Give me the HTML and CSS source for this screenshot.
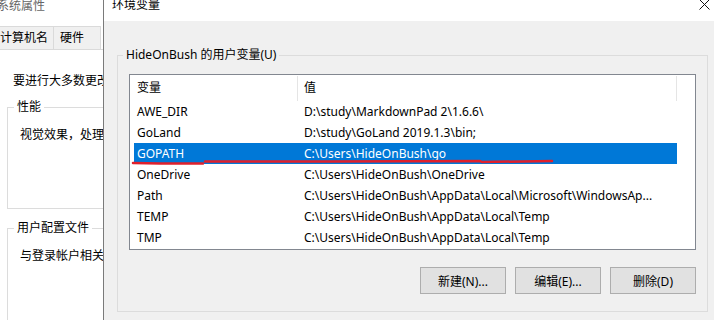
FILE: index.html
```html
<!DOCTYPE html>
<html lang="zh-CN">
<head>
    <meta charset="UTF-8">
    <link rel="stylesheet" href="styles.css">
    <title>环境变量</title>
</head>
<body>
    <div class="screen">
        <div class="sysprops">
            <div class="sys-title">系统属性</div>
            <div class="tabs">
                <div class="tab tab-first">计算机名</div>
                <div class="tab">硬件</div>
            </div>
            <div class="tab-page">
                <div class="intro">要进行大多数更改</div>
                <div class="sys-group perf">
                    <span class="sys-legend">性能</span>
                    <div class="sys-text">视觉效果，处理器计划</div>
                </div>
                <div class="sys-group profile">
                    <span class="sys-legend">用户配置文件</span>
                    <div class="sys-text">与登录帐户相关的桌面设置</div>
                </div>
            </div>
        </div>

        <div class="dialog">
            <div class="dlg-title">
                <span>环境变量</span>
                <svg class="close" width="11" height="11" viewBox="0 0 11 11">
                    <path d="M0.5 0.5 L10.5 10.5 M10.5 0.5 L0.5 10.5" stroke="#111" stroke-width="1" fill="none"/>
                </svg>
            </div>
            <div class="dlg-body">
                <div class="group">
                    <span class="legend">HideOnBush 的用户变量(U)</span>
                    <div class="listview">
                        <div class="lv-head">
                            <div class="col-name">变量</div>
                            <div class="col-value">值</div>
                            <div class="col-rest"></div>
                        </div>
                        <div class="lv-row"><div class="col-name">AWE_DIR</div><div class="col-value">D:\study\MarkdownPad 2\1.6.6\</div></div>
                        <div class="lv-row"><div class="col-name">GoLand</div><div class="col-value">D:\study\GoLand 2019.1.3\bin;</div></div>
                        <div class="lv-row selected"><div class="col-name">GOPATH</div><div class="col-value">C:\Users\HideOnBush\go</div></div>
                        <div class="lv-row"><div class="col-name">OneDrive</div><div class="col-value">C:\Users\HideOnBush\OneDrive</div></div>
                        <div class="lv-row"><div class="col-name">Path</div><div class="col-value">C:\Users\HideOnBush\AppData\Local\Microsoft\WindowsAp...</div></div>
                        <div class="lv-row"><div class="col-name">TEMP</div><div class="col-value">C:\Users\HideOnBush\AppData\Local\Temp</div></div>
                        <div class="lv-row"><div class="col-name">TMP</div><div class="col-value">C:\Users\HideOnBush\AppData\Local\Temp</div></div>
                    </div>
                    <div class="buttons">
                        <button>新建(N)...</button>
                        <button>编辑(E)...</button>
                        <button>删除(D)</button>
                    </div>
                </div>
            </div>
        </div>

        <!-- hand drawn red underline on the screenshot -->
        <svg class="scribble" width="714" height="320" viewBox="0 0 714 320">
            <path d="M133 163 L160 163.5 L203 163.5" stroke="#e0202c" stroke-width="2.5" fill="none" stroke-linecap="round"/>
            <path d="M205 161.5 L330 161.5 L480 161 L482 162 L552 161" stroke="#e0202c" stroke-width="2.5" fill="none" stroke-linecap="round"/>
        </svg>
    </div>
</body>
</html>
```

FILE: styles.css
```css
* {
  box-sizing: border-box;
  margin: 0;
  padding: 0;
}

body {
  margin: 0;
  width: 714px;
  height: 320px;
  overflow: hidden;
  font-family: "Noto Sans", "Noto Sans CJK SC", sans-serif;
  font-size: 12px;
  color: #000;
  background: #f0f0f0;
}

.screen {
  position: relative;
  display: flex;
  width: 714px;
  height: 320px;
}

/* background window: 系统属性 */
.sysprops {
  width: 103px;
  flex-shrink: 0;
  background: #fff;
  overflow: hidden;
  white-space: nowrap;
}

.sys-title {
  height: 30px;
  margin-left: -3px;
  margin-top: -4px;
  line-height: 20px;
  font-size: 12px;
  color: #666;
}

.tabs {
  display: flex;
  height: 24px;
  border-bottom: 1px solid #dadada;
}

.tab {
  background: #f0f0f0;
  border: 1px solid #dadada;
  border-bottom: 0;
  line-height: 22px;
  padding: 0 6px;
  width: 48px;
  margin-left: -1px;
}

.tab-first {
  width: 54px;
  padding-left: 0;
  border-left: 0;
  margin-left: 0;
}

.tab-page {
  padding-top: 23px;
}

.intro {
  padding-left: 13px;
  line-height: 16px;
}

.sys-group {
  border: 1px solid #dcdcdc;
  border-right: 0;
  margin-left: 7px;
  position: relative;
}

.perf {
  margin-top: 18px;
  height: 102px;
}

.profile {
  margin-top: 19px;
  height: 120px;
}

.sys-legend {
  position: absolute;
  top: -9px;
  left: 6px;
  padding: 0 3px;
  background: #fff;
  line-height: 16px;
}

.sys-text {
  padding: 19px 0 0 12px;
  line-height: 16px;
}

.profile .sys-text {
  padding-top: 19px;
}

/* front dialog: 环境变量 */
.dialog {
  flex: 1;
  border-left: 1px solid #7a7a7a;
  display: flex;
  flex-direction: column;
}

.dlg-title {
  height: 21px;
  background: #fff;
  display: flex;
  justify-content: space-between;
  align-items: flex-start;
  padding: 0 4px 0 8px;
}

.dlg-title span {
  margin-top: -4px;
  line-height: 18px;
}

.close {
  margin-top: -1px;
}

.dlg-body {
  flex: 1;
  padding: 34px 6px 8px 13px;
}

.group {
  position: relative;
  height: 257px;
  border: 1px solid #dcdcdc;
  padding: 18px 11px 0 11px;
}

.legend {
  position: absolute;
  top: -9px;
  left: 5px;
  padding: 0 3px;
  background: #f0f0f0;
  line-height: 16px;
}

.listview {
  height: 176px;
  background: #fff;
  border: 1px solid #828790;
  padding-left: 4px;
}

.lv-head,
.lv-row {
  display: flex;
  white-space: nowrap;
}

.lv-head {
  height: 26px;
  line-height: 24px;
  padding-top: 1px;
}

.lv-head .col-name,
.lv-head .col-value {
  border-right: 1px solid #e5e5e5;
}

.lv-row {
  height: 21px;
  line-height: 21px;
  width: 543px;
}

.col-name {
  width: 164px;
  padding-left: 3px;
}

.col-value {
  width: 379px;
  padding-left: 6px;
  overflow: hidden;
}

.col-rest {
  flex: 1;
}

.selected {
  background: #0078d7;
  color: #fff;
}

.buttons {
  display: flex;
  justify-content: flex-end;
  gap: 9px;
  margin-top: 17px;
}

button {
  width: 86px;
  height: 27px;
  background: #e1e1e1;
  border: 1px solid #adadad;
  font-family: "Noto Sans", "Noto Sans CJK SC", sans-serif;
  font-size: 12px;
  color: #000;
}

.scribble {
  position: absolute;
  left: 0;
  top: 0;
  pointer-events: none;
}
```
